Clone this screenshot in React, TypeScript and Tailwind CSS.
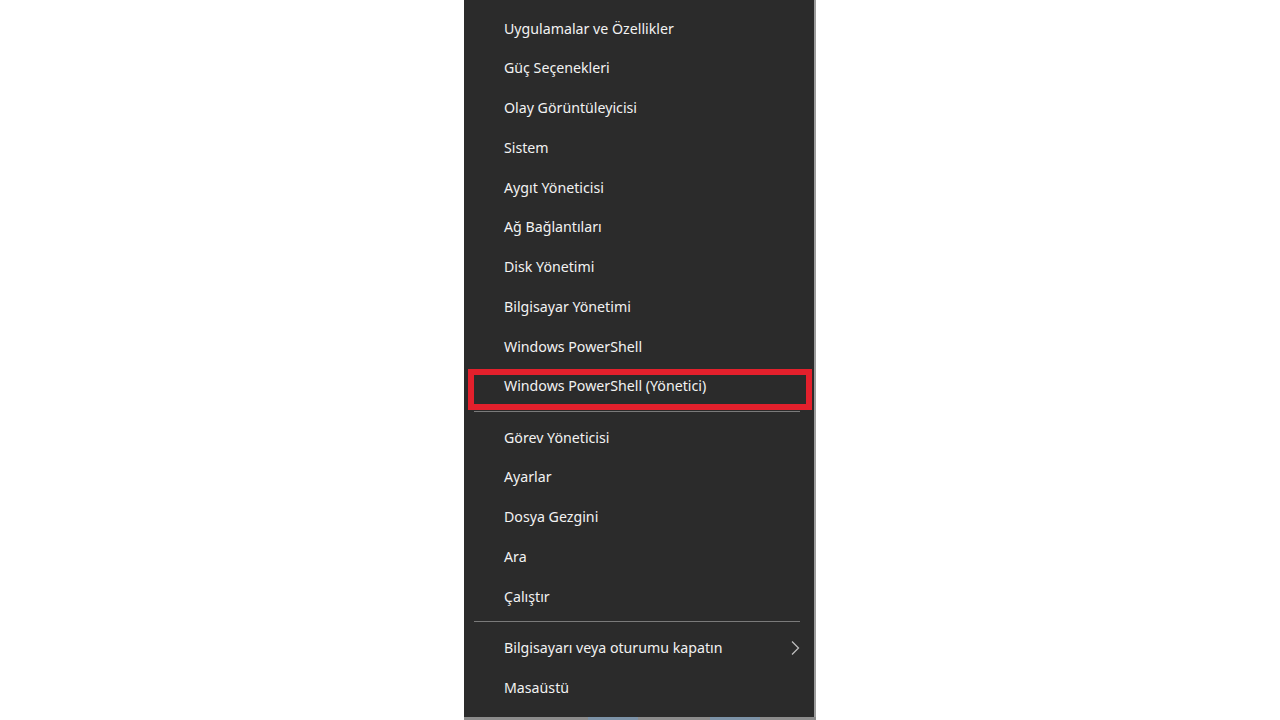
const groups: string[][] = [
  [
    "Uygulamalar ve Özellikler",
    "Güç Seçenekleri",
    "Olay Görüntüleyicisi",
    "Sistem",
    "Aygıt Yöneticisi",
    "Ağ Bağlantıları",
    "Disk Yönetimi",
    "Bilgisayar Yönetimi",
    "Windows PowerShell",
    "Windows PowerShell (Yönetici)",
  ],
  ["Görev Yöneticisi", "Ayarlar", "Dosya Gezgini", "Ara", "Çalıştır"],
  ["Bilgisayarı veya oturumu kapatın", "Masaüstü"],
];

function Chevron() {
  return (
    <svg width="10" height="16" viewBox="0 0 10 16" className="text-[#bdbdbd]">
      <path d="M2 1.5 L8.5 8 L2 14.5" fill="none" stroke="currentColor" strokeWidth="1.3" />
    </svg>
  );
}

function Item({ label }: { label: string }) {
  const hasSub = label.startsWith("Bilgisayarı");
  return (
    <div className="flex h-[39.75px] items-center justify-between pl-[40px] pr-[14px] pt-[1px]">
      <span className="text-[14.2px] text-[#f2f2f2]">{label}</span>
      {hasSub && <Chevron />}
    </div>
  );
}

export default function App() {
  return (
    <div className="flex h-[720px] w-full justify-center bg-white">
      <div
        className="relative flex h-[720px] w-[352px] flex-col border-r-2 border-[#9c9c9c] bg-[#2b2b2b] pt-[8px]"
        style={{ fontFamily: '"Noto Sans", "Open Sans", sans-serif' }}
      >
        {groups.map((g, gi) => (
          <div key={gi}>
            {gi > 0 && (
              <div className="flex h-[11.5px] items-center pl-[10px] pr-[14px]">
                <div className="h-px w-full bg-[#7a7a7a]" />
              </div>
            )}
            {g.map((label) => (
              <Item key={label} label={label} />
            ))}
          </div>
        ))}

        {/* red highlight annotation */}
        <div className="absolute left-[4px] top-[369px] h-[41px] w-[344px] border-[6px] border-[#e3202c]" />

        {/* taskbar peeking underneath */}
        <div className="absolute bottom-0 left-0 right-[-2px] flex h-[3px] bg-[#8c8c8c]">
          <div className="ml-[124px] h-full w-[50px] bg-[#7d93a8]" />
          <div className="ml-[72px] h-full w-[50px] bg-[#7d93a8]" />
        </div>
      </div>
    </div>
  );
}
